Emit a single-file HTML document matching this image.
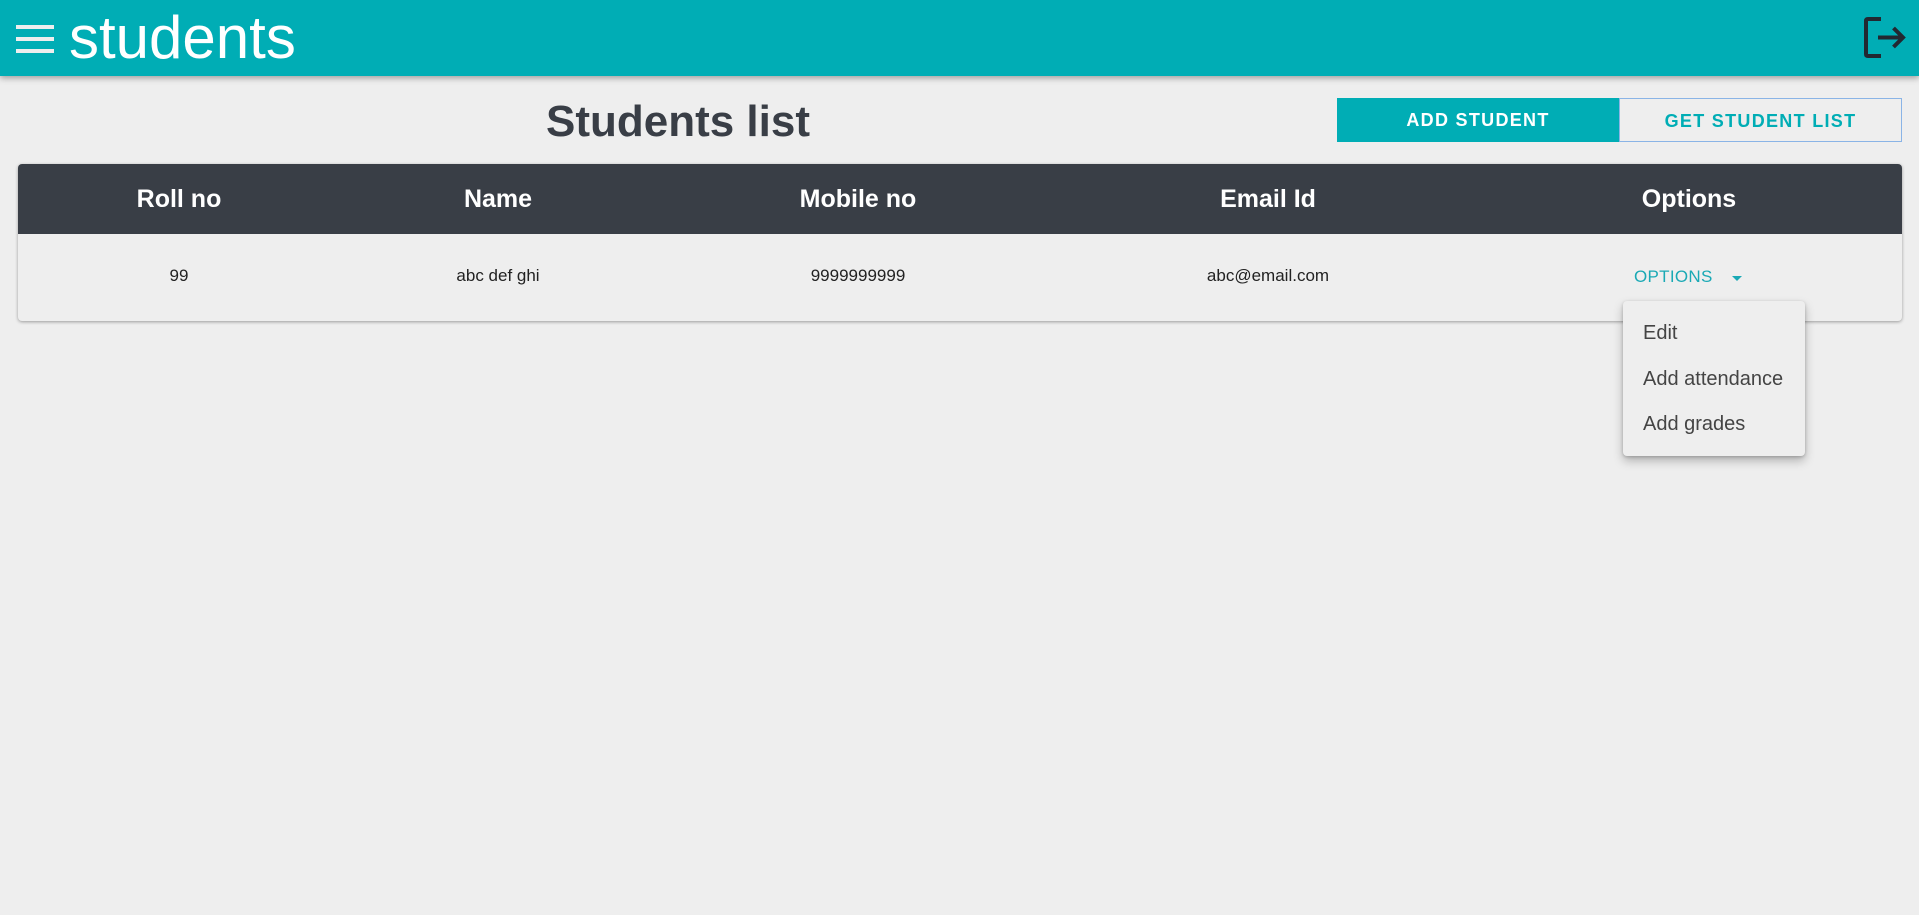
<!DOCTYPE html>
<html><head><meta charset="utf-8"><style>
*{margin:0;padding:0;box-sizing:border-box}
body{width:1919px;height:915px;background:#eeeeee;font-family:"Liberation Sans",Arial,sans-serif;position:relative;overflow:hidden}
.hdr{position:absolute;left:0;top:0;width:1919px;height:76px;background:#00adb5;box-shadow:0 2px 6px rgba(0,0,0,.35)}
.ham{position:absolute;left:16px;top:25px;width:38px}
.ham div{height:4px;background:#eee;margin-bottom:8px}
.brand{position:absolute;left:69px;top:3px;font-size:60px;color:#fff;line-height:70px}
.title{position:absolute;left:478px;width:400px;text-align:center;top:97px;font-size:44px;font-weight:bold;color:#393e46}
.btn{position:absolute;top:98px;height:44px;width:282px;text-align:center;line-height:44px;font-weight:bold;font-size:18px;letter-spacing:1.3px}
.b1{left:1337px;background:#00adb5;color:#fff}
.b2{left:1619px;border:1px solid #8ab4e6;color:#00adb5;width:283px}
.tbl{position:absolute;left:18px;top:164px;width:1884px;height:157px;border-radius:4px;background:#eee;box-shadow:0 1px 3px rgba(0,0,0,.35);overflow:hidden}
.th{height:70px;background:#393e46}
.c{position:absolute;transform:translateX(-50%);white-space:nowrap}
.h{top:21px;color:#fff;font-weight:bold;font-size:25px}
.r{top:102px;color:#222;font-size:17px}
.opt{position:absolute;left:1634px;top:267px;color:#1aa9b5;font-size:17px;letter-spacing:.3px}
.caret{position:absolute;left:1732px;top:276px;border-left:5px solid transparent;border-right:5px solid transparent;border-top:5px solid #1aa9b5}
.menu{position:absolute;left:1623px;top:301px;width:182px;height:155px;background:#eee;border-radius:4px;box-shadow:0 5px 10px rgba(0,0,0,.25),0 1px 3px rgba(0,0,0,.2)}
.menu div{position:absolute;left:20px;font-size:20px;color:#444}
</style></head><body>
<div class="hdr">
 <div class="ham"><div></div><div></div><div></div></div>
 <div class="brand">students</div>
 <svg style="position:absolute;left:1862px;top:16px" width="46" height="44" viewBox="0 0 46 44"><path d="M19 3H6Q4 3 4 5v33q0 2 2 2h13" fill="none" stroke="#222831" stroke-width="4"/><path d="M16 21.5h25M31.5 12l9.5 9.5L31.5 31" fill="none" stroke="#222831" stroke-width="4"/></svg>
</div>
<div class="title">Students list</div>
<div class="btn b1">ADD STUDENT</div>
<div class="btn b2">GET STUDENT LIST</div>
<div class="tbl">
 <div class="th"></div>
 <div class="c h" style="left:161px">Roll no</div>
 <div class="c h" style="left:480px">Name</div>
 <div class="c h" style="left:840px">Mobile no</div>
 <div class="c h" style="left:1250px">Email Id</div>
 <div class="c h" style="left:1671px">Options</div>
 <div class="c r" style="left:161px">99</div>
 <div class="c r" style="left:480px">abc def ghi</div>
 <div class="c r" style="left:840px">9999999999</div>
 <div class="c r" style="left:1250px">abc@email.com</div>
</div>
<div class="opt">OPTIONS</div>
<div class="caret"></div>
<div class="menu">
 <div style="top:21px">Edit</div>
 <div style="top:67px">Add attendance</div>
 <div style="top:112px">Add grades</div>
</div>
</body></html>
